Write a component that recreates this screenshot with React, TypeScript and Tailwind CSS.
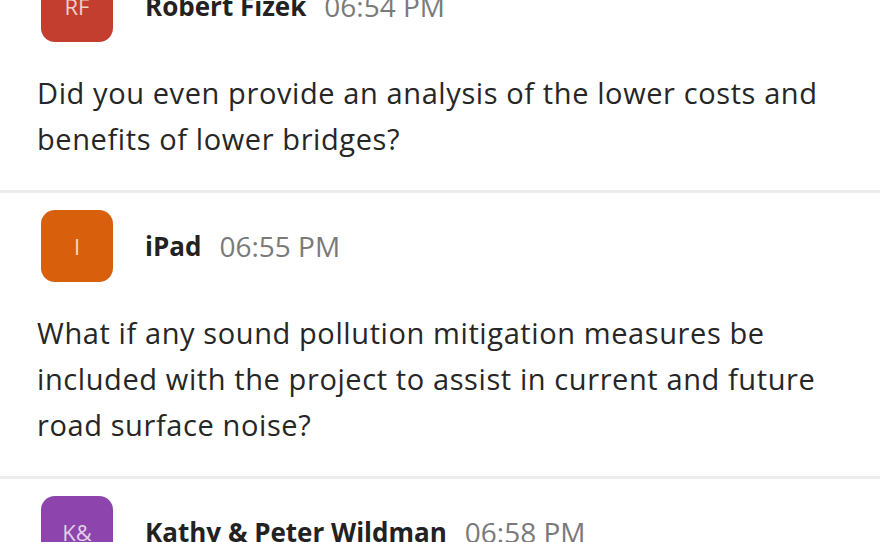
import React from "react";

type Msg = {
  initials: string;
  color: string;
  name: string;
  time: string;
  lines: string[];
};

const messages: Msg[] = [
  {
    initials: "RF",
    color: "bg-[#c43e30]",
    name: "Robert Fizek",
    time: "06:54 PM",
    lines: ["Did you even provide an analysis of the lower costs and", "benefits of lower bridges?"],
  },
  {
    initials: "I",
    color: "bg-[#d8600c]",
    name: "iPad",
    time: "06:55 PM",
    lines: [
      "What if any sound pollution mitigation measures be",
      "included with the project to assist in current and future",
      "road surface noise?",
    ],
  },
  {
    initials: "K&",
    color: "bg-[#8d45ad]",
    name: "Kathy & Peter Wildman",
    time: "06:58 PM",
    lines: [],
  },
];

function Message({ m }: { m: Msg }) {
  return (
    <div className="border-t-[3px] border-[#ececec] pt-[17px] pb-[28px]">
      <div className="flex items-center pl-[41px]">
        <div
          className={`${m.color} w-[72px] h-[72px] rounded-[14px] flex items-center justify-center text-[22px] text-white/75`}
        >
          {m.initials}
        </div>
        <span className="ml-[32px] text-[26px] font-bold text-[#222]">{m.name}</span>
        <span className="ml-[18px] text-[28px] text-[#7a7a7a]">{m.time}</span>
      </div>
      {m.lines.length > 0 && (
        <p className="mt-[28px] pl-[37px] text-[29px] tracking-[0.6px] leading-[46px] text-[#262626] whitespace-nowrap">
          {m.lines.map((l, i) => (
            <span key={i} className="block">
              {l}
            </span>
          ))}
        </p>
      )}
    </div>
  );
}

export default function App() {
  return (
    <div className="w-[880px] h-[542px] overflow-hidden bg-white font-['Open_Sans',sans-serif]">
      <div className="-mt-[50px]">
        {messages.map((m) => (
          <Message key={m.name} m={m} />
        ))}
      </div>
    </div>
  );
}
